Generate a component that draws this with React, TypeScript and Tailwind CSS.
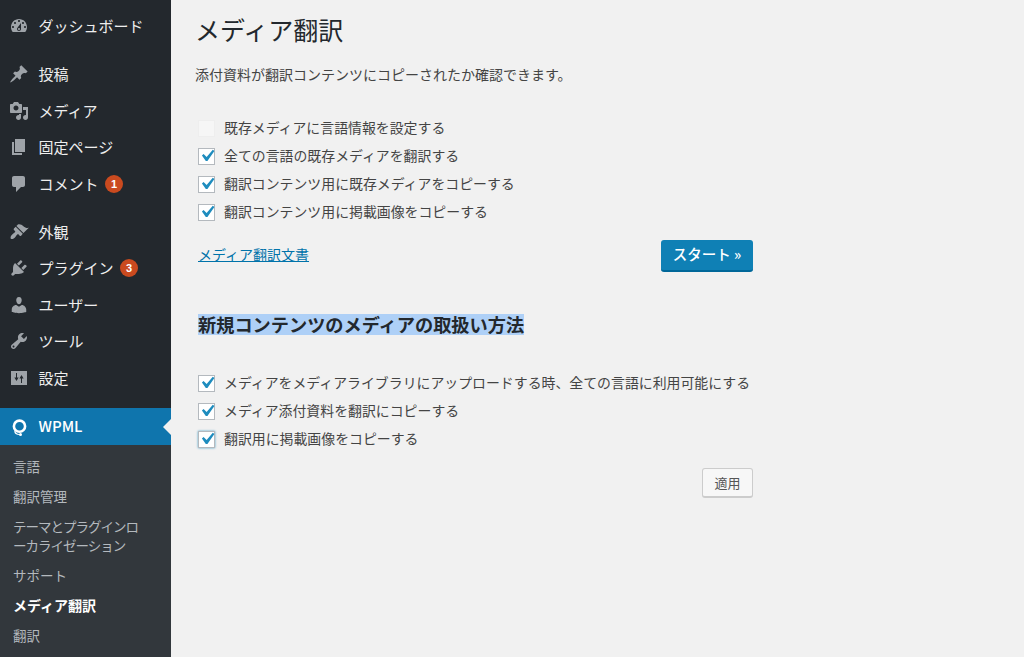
const F = { fontFamily: '"Noto Sans CJK JP", "Liberation Sans", sans-serif' };

const P: Record<string, string> = {
  dash: "M3.76 16h12.48c1.1-1.37 1.76-3.11 1.76-5 0-4.42-3.58-8-8-8s-8 3.58-8 8c0 1.89.66 3.63 1.76 5zM10 4c.55 0 1 .45 1 1s-.45 1-1 1-1-.45-1-1 .45-1 1-1zM6 6c.55 0 1 .45 1 1s-.45 1-1 1-1-.45-1-1 .45-1 1-1zm8 0c.55 0 1 .45 1 1s-.45 1-1 1-1-.45-1-1 .45-1 1-1zm-5.37 5.55L12 7v6c0 1.1-.9 2-2 2s-2-.9-2-2c0-.57.24-1.08.63-1.45zM4 10c.55 0 1 .45 1 1s-.45 1-1 1-1-.45-1-1 .45-1 1-1zm12 0c.55 0 1 .45 1 1s-.45 1-1 1-1-.45-1-1 .45-1 1-1zm-5 3c0-.55-.45-1-1-1s-1 .45-1 1 .45 1 1 1 1-.45 1-1z",
  pin: "M10.44 3.02l1.82-1.82 6.36 6.35-1.83 1.82c-1.05-.68-2.48-.57-3.41.36l-.75.75c-.92.93-1.04 2.35-.35 3.41l-1.83 1.82-2.41-2.41-2.8 2.79c-.42.42-3.38 2.71-3.8 2.29s1.86-3.39 2.28-3.81l2.79-2.79L4.1 9.36l1.83-1.82c1.05.69 2.48.57 3.4-.36l.75-.75c.93-.92 1.05-2.35.36-3.41z",
  media: "M13 11V4c0-.55-.45-1-1-1h-1.67L9 1H5L3.67 3H2c-.55 0-1 .45-1 1v7c0 .55.45 1 1 1h10c.55 0 1-.45 1-1zM7 4.5c1.38 0 2.5 1.12 2.5 2.5S8.38 9.5 7 9.5 4.5 8.38 4.5 7 5.62 4.5 7 4.5zM14 6h5v10.5c0 1.38-1.12 2.5-2.5 2.5S14 17.88 14 16.5s1.12-2.5 2.5-2.5c.17 0 .34.02.5.05V9h-3V6zm-4 8.05V13h2v3.5c0 1.38-1.12 2.5-2.5 2.5S7 17.88 7 16.5 8.12 14 9.5 14c.17 0 .34.02.5.05z",
  page: "M6 15V2h10v13H6zm-1 1h8v2H3V5h2v11z",
  comment: "M5 2h9c1.1 0 2 .9 2 2v7c0 1.1-.9 2-2 2h-2l-5 5v-5H5c-1.1 0-2-.9-2-2V4c0-1.1.9-2 2-2z",
  brush: "M14.48 11.06L7.41 3.99l1.5-1.5c.5-.56 2.3-.47 3.51.32 1.21.8 1.43 1.28 2.91 2.1 1.18.64 2.45 1.26 4.45.85zm-.71.71L6.7 4.7 4.93 6.47c-.39.39-.39 1.02 0 1.41l1.06 1.06c.39.39.39 1.03 0 1.42-.6.6-1.43 1.11-2.21 1.69-.35.26-.7.53-1.01.84-1.43 1.43-1.43 3.26-.88 3.81s2.38.55 3.81-.88c.31-.31.58-.66.84-1.01.58-.78 1.09-1.61 1.69-2.21.39-.39 1.03-.39 1.42 0l1.06 1.06c.39.39 1.02.39 1.41 0z",
  plug: "M13.11 4.36L9.87 7.6 8 5.73l3.24-3.24c.35-.34 1.05-.2 1.56.32.52.51.66 1.21.31 1.55zm-8 1.77l.91-1.12 9.01 9.01-1.19.84c-.71.71-2.63 1.16-3.82 1.16H6.14L4.9 17.26c-.59.59-1.54.59-2.12 0-.59-.58-.59-1.53 0-2.12l1.24-1.24v-3.88c0-1.13.4-3.19 1.09-3.89zm7.26 3.97l3.24-3.24c.34-.35 1.04-.21 1.55.31.52.51.66 1.21.31 1.55l-3.24 3.25z",
  user: "M10 9.25c-2.27 0-2.73-3.44-2.73-3.44C7 4.02 7.82 2 9.97 2c2.16 0 2.98 2.02 2.71 3.81 0 0-.41 3.44-2.68 3.44zm0 2.57L12.72 10c2.39 0 4.52 2.33 4.52 4.53v2.49s-3.65 1.13-7.24 1.13c-3.65 0-7.24-1.13-7.24-1.13v-2.49c0-2.25 1.94-4.48 4.47-4.48z",
  tool: "M16.68 9.77c-1.34 1.34-3.3 1.67-4.95.99l-5.41 6.52c-.99.99-2.59.99-3.58 0s-.99-2.59 0-3.57l6.52-5.42c-.68-1.65-.35-3.61.99-4.95 1.28-1.28 3.12-1.62 4.72-1.06l-2.89 2.89 2.82 2.82 2.86-2.87c.53 1.58.18 3.39-1.08 4.65zM3.81 16.21c.4.39 1.04.39 1.43 0 .4-.4.4-1.04 0-1.43-.39-.4-1.03-.4-1.43 0-.39.39-.39 1.03 0 1.43z",
  set: "M2 3h16v14H2z M7 5h1v4.5h1.6L7.5 13 5.4 9.5H7z M12 15h1v-4.5h1.6L12.5 7l-2.1 3.5H12z",
};

function Row({ icon, label, badge }: { icon: string; label: string; badge?: string }) {
  return (
    <div className="flex items-center h-[36.5px] pl-[9px]">
      <svg viewBox="0 0 20 20" className="w-5 h-5 shrink-0 fill-[#9ea3a8]"><path fillRule="evenodd" d={P[icon]} /></svg>
      <span className="ml-[9.5px] text-[15px] text-[#eeeeee] whitespace-nowrap">{label}</span>
      {badge && <span className="ml-[6.5px] w-[18px] h-[18px] rounded-full bg-[#ca4a1f] text-white text-[11px] font-bold flex items-center justify-center" style={{ fontFamily: '"Liberation Sans", sans-serif' }}>{badge}</span>}
    </div>
  );
}

function Check({ label, on = true, focus = false }: { label: string; on?: boolean; focus?: boolean }) {
  return (
    <div className="flex items-center h-[28px]">
      <span className={`w-[17px] h-[17px] shrink-0 flex items-center justify-center border ${on ? "bg-white border-[#b4b9be]" : "bg-[#f6f6f6] border-[#eeeeee]"} ${focus ? "border-[#5b9dd9] shadow-[0_0_2px_rgba(30,140,190,0.8)]" : ""}`}>
        {on && (
          <svg viewBox="0 0 20 20" className="w-[24px] h-[24px] shrink-0 fill-[#1e8cbe]"><path d="M14.83 4.89l1.34.94-5.81 8.38H9.02L5.78 9.67l1.34-1.25 2.57 2.4z" /></svg>
        )}
      </span>
      <span className="ml-[9px] pb-[2px] text-[13.9px] text-[#444444] whitespace-nowrap">{label}</span>
    </div>
  );
}

export default function App() {
  return (
    <div className="flex w-[1024px] h-[657px] overflow-hidden bg-[#f1f1f1]" style={F}>
      <aside className="w-[171px] shrink-0 bg-[#23282d] flex flex-col pt-[8px]">
        <Row icon="dash" label="ダッシュボード" />
        <div className="h-[11.5px]" />
        <Row icon="pin" label="投稿" />
        <Row icon="media" label="メディア" />
        <Row icon="page" label="固定ページ" />
        <Row icon="comment" label="コメント" badge="1" />
        <div className="h-[11.5px]" />
        <Row icon="brush" label="外観" />
        <Row icon="plug" label="プラグイン" badge="3" />
        <Row icon="user" label="ユーザー" />
        <Row icon="tool" label="ツール" />
        <Row icon="set" label="設定" />
        <div className="h-[12px]" />
        <div className="relative flex items-center h-[37px] pl-[9px] bg-[#0f75ad]">
          <svg viewBox="0 0 20 20" className="w-5 h-5 shrink-0">
            <circle cx="10.5" cy="9.2" r="5.6" className="fill-none stroke-white stroke-[2.6]" />
            <path d="M5.8 13.5c0 2.6 2 4 4.8 4" className="fill-none stroke-white stroke-[1.2]" />
            <circle cx="11.5" cy="17.5" r="1.5" className="fill-white" />
          </svg>
          <span className="ml-[9.5px] text-[15px] font-medium text-white">WPML</span>
          <span className="absolute right-0 top-[11px] w-0 h-0 border-y-[8px] border-y-transparent border-r-[8px] border-r-[#f1f1f1]" />
        </div>
        <div className="flex-1 bg-[#32373c] pt-[6px] pl-[13px] text-[13.5px] leading-[19px] text-[#b4b9be]">
          <div className="h-[30px] flex items-center">言語</div>
          <div className="h-[30px] flex items-center">翻訳管理</div>
          <div className="pt-[6px] pb-[5px] tracking-[-1px]">テーマとプラグインロ<br />ーカライゼーション</div>
          <div className="h-[30px] flex items-center">サポート</div>
          <div className="h-[30px] flex items-center font-bold text-[14px] text-white">メディア翻訳</div>
          <div className="h-[30px] flex items-center">翻訳</div>
        </div>
      </aside>
      <main className="flex-1 pl-[24px] text-[#444444]">
        <h1 className="text-[25px] leading-[32px] mt-[13px] text-[#23282d] font-normal">メディア翻訳</h1>
        <p className="text-[14px] leading-[20px] mt-[19px] text-[#444444]">添付資料が翻訳コンテンツにコピーされたか確認できます。</p>
        <div className="w-[555px] ml-[3px] mt-[30px]">
          <Check on={false} label="既存メディアに言語情報を設定する" />
          <Check label="全ての言語の既存メディアを翻訳する" />
          <Check label="翻訳コンテンツ用に既存メディアをコピーする" />
          <Check label="翻訳コンテンツ用に掲載画像をコピーする" />
          <div className="flex items-center justify-between mt-[14px]">
            <a className="mb-[3px] text-[14px] text-[#0073aa] underline">メディア翻訳文書</a>
            <button className="w-[92px] h-[32px] pb-[2px] rounded-[3px] bg-[#0f80b5] border-b-2 border-[#006799] text-white text-[14.5px] font-medium">スタート »</button>
          </div>
          <h2 className="mt-[42px] text-[18.2px] leading-[21px] font-bold text-[#23282d]"><span className="inline-block bg-[#aed0f7]">新規コンテンツのメディアの取扱い方法</span></h2>
          <div className="mt-[34px]">
            <Check label="メディアをメディアライブラリにアップロードする時、全ての言語に利用可能にする" />
            <Check label="メディア添付資料を翻訳にコピーする" />
            <Check focus label="翻訳用に掲載画像をコピーする" />
          </div>
          <div className="flex justify-end mt-[15px]">
            <button className="w-[51px] h-[30px] rounded-[3px] bg-[#f7f7f7] border border-[#cccccc] border-b-2 text-[#555555] text-[13px]">適用</button>
          </div>
        </div>
      </main>
    </div>
  );
}
